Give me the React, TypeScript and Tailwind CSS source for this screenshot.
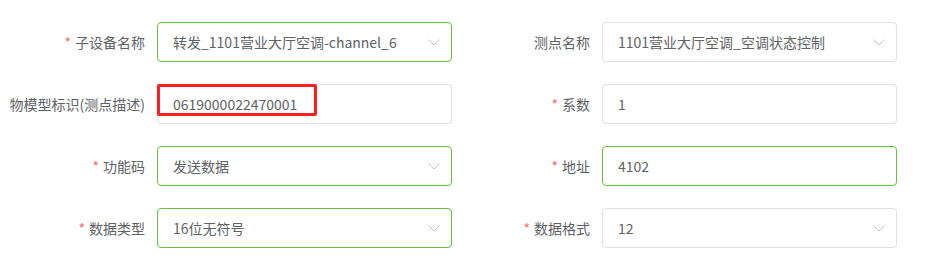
import React from 'react';

type Field = {
  label: string;
  value: string;
  required?: boolean;
  select?: boolean;
  ok?: boolean;
  marked?: boolean;
};

const rows: [Field, Field][] = [
  [
    { label: '子设备名称', value: '转发_1101营业大厅空调-channel_6', required: true, select: true, ok: true },
    { label: '测点名称', value: '1101营业大厅空调_空调状态控制', select: true },
  ],
  [
    { label: '物模型标识(测点描述)', value: '0619000022470001', marked: true },
    { label: '系数', value: '1', required: true },
  ],
  [
    { label: '功能码', value: '发送数据', required: true, select: true, ok: true },
    { label: '地址', value: '4102', required: true, ok: true },
  ],
  [
    { label: '数据类型', value: '16位无符号', required: true, select: true, ok: true },
    { label: '数据格式', value: '12', required: true, select: true },
  ],
];

function Chevron() {
  return (
    <svg width="12" height="7" viewBox="0 0 12 7" className="shrink-0">
      <path d="M0.5 0.5 L6 6 L11.5 0.5" fill="none" stroke="#c0c4cc" strokeWidth="1" />
    </svg>
  );
}

function FormItem({ field, labelWidth }: { field: Field; labelWidth: string }) {
  return (
    <div className="flex items-center">
      <label className={`${labelWidth} shrink-0 pr-3 text-right text-sm text-[#606266] whitespace-nowrap`}>
        {field.required && <span className="mr-1 text-[#f56c6c]">*</span>}
        {field.label}
      </label>
      <div
        className={`relative flex h-10 w-[295px] items-center rounded border bg-white pl-[15px] pr-[11px] ${
          field.ok ? 'border-[#67c23a]' : 'border-[#dcdfe6]'
        }`}
      >
        <span className="flex-1 truncate text-sm text-[#606266]">{field.value}</span>
        {field.select && <Chevron />}
        {field.marked && (
          <div className="absolute left-[-1px] top-[-1px] h-[32px] w-[160px] rounded-[2px] border-[3px] border-[#ff1f1f]" />
        )}
      </div>
    </div>
  );
}

export default function App() {
  return (
    <div
      className="h-[264px] w-[926px] bg-white pt-[22px]"
      style={{ fontFamily: '"Noto Sans CJK SC", "Liberation Sans", sans-serif' }}
    >
      <div className="flex flex-col gap-[22px]">
        {rows.map(([a, b], i) => (
          <div key={i} className="flex">
            <FormItem field={a} labelWidth="w-[157px]" />
            <FormItem field={b} labelWidth="w-[150px]" />
          </div>
        ))}
      </div>
    </div>
  );
}
